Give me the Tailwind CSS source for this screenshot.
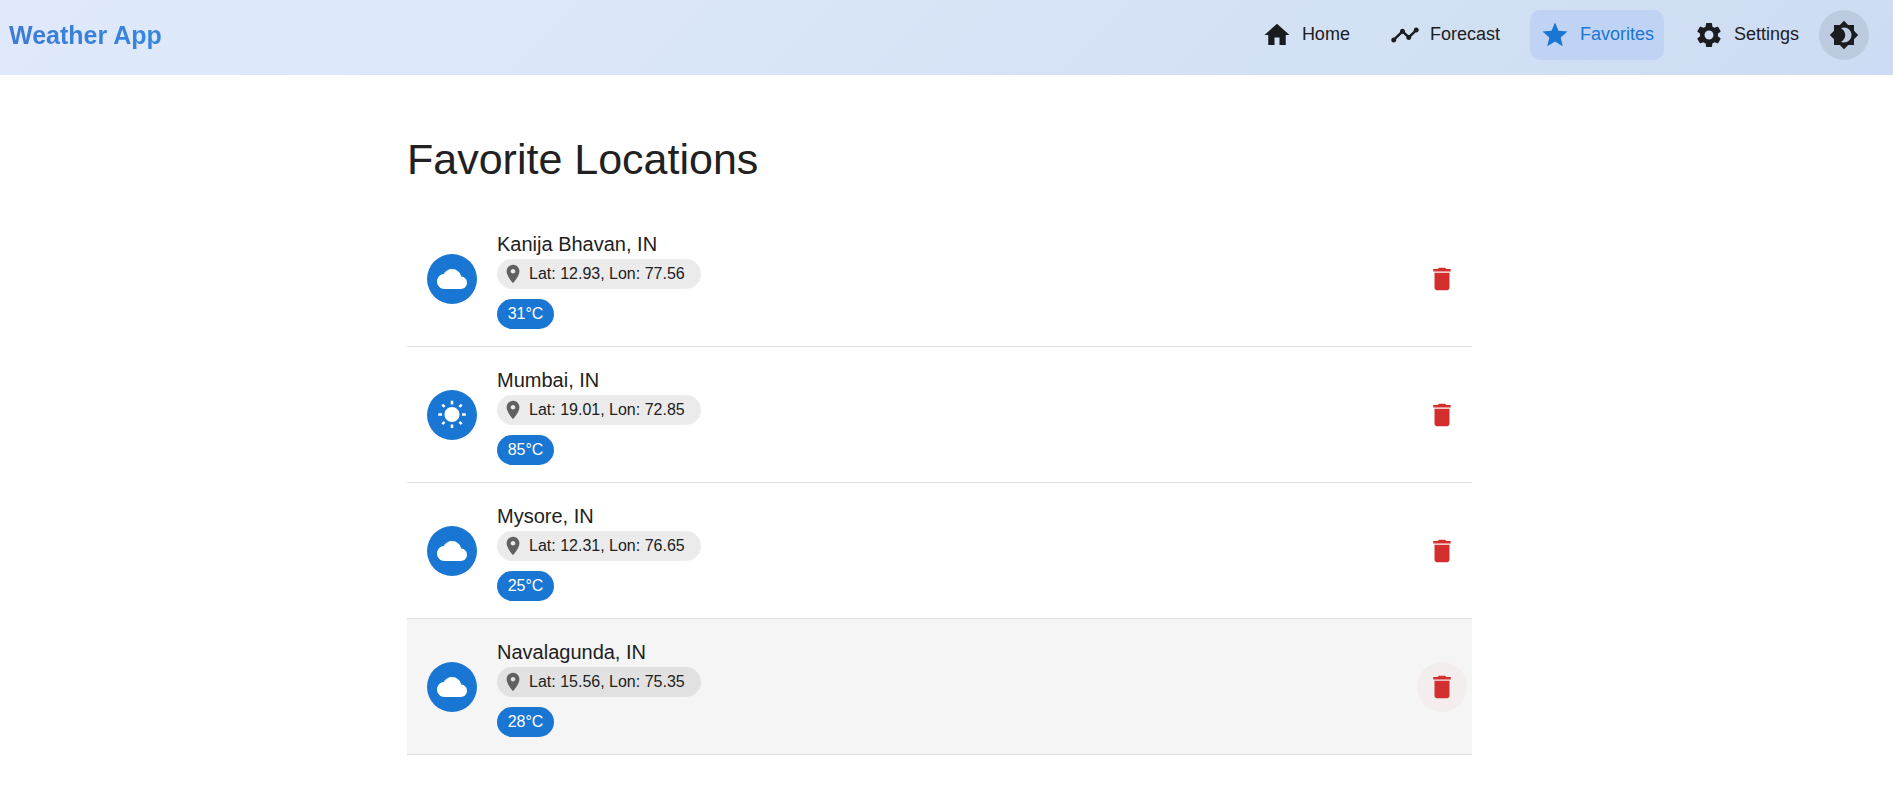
<!DOCTYPE html>
<html lang="en">
<head>
<meta charset="utf-8">
<meta name="viewport" content="width=device-width, initial-scale=1">
<title>Weather App</title>
<script src="https://cdn.jsdelivr.net/npm/@tailwindcss/browser@4"></script>
</head>
<body class="bg-white font-['Liberation_Sans',Arial,sans-serif] text-[#212121]">

<svg class="hidden" aria-hidden="true">
  <symbol id="cloud" viewBox="0 0 24 24"><path d="M19.35 10.04C18.67 6.59 15.64 4 12 4 9.11 4 6.6 5.64 5.35 8.04 2.34 8.36 0 10.91 0 14c0 3.31 2.69 6 6 6h13c2.76 0 5-2.24 5-5 0-2.64-2.05-4.78-4.65-4.96z"/></symbol>
  <symbol id="sun" viewBox="0 0 24 24"><path d="m6.76 4.84-1.8-1.79-1.41 1.41 1.79 1.79 1.42-1.41zM4 10.5H1v2h3v-2zm9-9.95h-2V3.5h2V.55zm7.45 3.91-1.41-1.41-1.79 1.79 1.41 1.41 1.79-1.79zm-3.21 13.7 1.79 1.8 1.41-1.41-1.8-1.79-1.4 1.4zM20 10.5v2h3v-2h-3zm-8-5c-3.31 0-6 2.69-6 6s2.69 6 6 6 6-2.69 6-6-2.69-6-6-6zm-1 16.95h2V19.5h-2v2.95zm-7.45-3.91 1.41 1.41 1.79-1.8-1.41-1.41-1.79 1.8z"/></symbol>
  <symbol id="pin" viewBox="0 0 24 24"><path d="M12 2C8.13 2 5 5.13 5 9c0 5.25 7 13 7 13s7-7.75 7-13c0-3.87-3.13-7-7-7zm0 9.5c-1.38 0-2.5-1.12-2.5-2.5s1.12-2.5 2.5-2.5 2.5 1.12 2.5 2.5-1.12 2.5-2.5 2.5z"/></symbol>
  <symbol id="trash" viewBox="0 0 24 24"><path d="M6 19c0 1.1.9 2 2 2h8c1.1 0 2-.9 2-2V7H6v12zM19 4h-3.5l-1-1h-5l-1 1H5v2h14V4z"/></symbol>
</svg>

<header class="flex items-center justify-between bg-linear-[135deg,#dfe9fb,#dbe7f9_30%,#d2e0f3_75%,#cddcf4] pt-2.5 pr-6 pb-[15px] pl-[9px]">
  <a href="#" class="bg-linear-[45deg,#3f78d6,#3389de] bg-clip-text text-[25px] leading-[30px] font-bold text-transparent">Weather App</a>
  <div class="flex items-center gap-2.5">
    <nav class="flex items-center gap-5 text-lg text-[#1b1c1f]">
      <a href="#" class="flex h-[50px] items-center gap-2.5 rounded-[10px] px-2.5">
        <svg class="size-[30px] fill-current" viewBox="0 0 24 24"><path d="M10 20v-6h4v6h5v-8h3L12 3 2 12h3v8z"/></svg>
        <span class="pb-0.5">Home</span>
      </a>
      <a href="#" class="flex h-[50px] items-center gap-2.5 rounded-[10px] px-2.5">
        <svg class="size-[30px] fill-current" viewBox="0 0 24 24"><path d="M23 8c0 1.1-.9 2-2 2-.18 0-.35-.02-.51-.07l-3.56 3.55c.05.16.07.34.07.52 0 1.1-.9 2-2 2s-2-.9-2-2c0-.18.02-.36.07-.52l-2.55-2.55c-.16.05-.34.07-.52.07s-.36-.02-.52-.07l-4.55 4.56c.05.16.07.33.07.51 0 1.1-.9 2-2 2s-2-.9-2-2 .9-2 2-2c.18 0 .35.02.51.07l4.56-4.55C8.02 9.36 8 9.18 8 9c0-1.1.9-2 2-2s2 .9 2 2c0 .18-.02.36-.07.52l2.55 2.55c.16-.05.34-.07.52-.07s.36.02.52.07l3.55-3.56C19.02 8.35 19 8.18 19 8c0-1.1.9-2 2-2s2 .9 2 2z"/></svg>
        <span class="pb-0.5">Forecast</span>
      </a>
      <a href="#" aria-current="page" class="flex h-[50px] items-center gap-2.5 rounded-[10px] bg-[#c0d3f4] px-2.5 text-[#1976d2]">
        <svg class="size-[30px] fill-current" viewBox="0 0 24 24"><path d="M12 17.27 18.18 21l-1.64-7.03L22 9.24l-7.19-.61L12 2 9.19 8.63 2 9.24l5.46 4.73L5.82 21z"/></svg>
        <span class="pb-0.5">Favorites</span>
      </a>
      <a href="#" class="flex h-[50px] items-center gap-2.5 rounded-[10px] px-2.5">
        <svg class="size-[30px] fill-current" viewBox="0 0 24 24"><path d="M19.14 12.94c.04-.3.06-.61.06-.94 0-.32-.02-.64-.07-.94l2.03-1.58c.18-.14.23-.41.12-.61l-1.92-3.32c-.12-.22-.37-.29-.59-.22l-2.39.96c-.5-.38-1.03-.7-1.62-.94l-.36-2.54c-.04-.24-.24-.41-.48-.41h-3.84c-.24 0-.43.17-.47.41l-.36 2.54c-.59.24-1.13.57-1.62.94l-2.39-.96c-.22-.08-.47 0-.59.22L2.74 8.87c-.12.21-.08.47.12.61l2.03 1.58c-.05.3-.09.63-.09.94s.02.64.07.94l-2.03 1.58c-.18.14-.23.41-.12.61l1.92 3.32c.12.22.37.29.59.22l2.39-.96c.5.38 1.03.7 1.62.94l.36 2.54c.05.24.24.41.48.41h3.84c.24 0 .44-.17.47-.41l.36-2.54c.59-.24 1.13-.56 1.62-.94l2.39.96c.22.08.47 0 .59-.22l1.92-3.32c.12-.22.07-.47-.12-.61l-2.01-1.58zM12 15.6c-1.98 0-3.6-1.62-3.6-3.6s1.62-3.6 3.6-3.6 3.6 1.62 3.6 3.6-1.62 3.6-3.6 3.6z"/></svg>
        <span class="pb-0.5">Settings</span>
      </a>
    </nav>
    <button type="button" aria-label="Toggle dark mode" class="flex size-[50px] items-center justify-center rounded-full bg-black/8 text-[#1b1c1f]">
      <svg class="size-[30px] fill-current" viewBox="0 0 24 24"><path d="M20 8.69V4h-4.69L12 .69 8.69 4H4v4.69L.69 12 4 15.31V20h4.69L12 23.31 15.31 20H20v-4.69L23.31 12 20 8.69zM12 18c-.89 0-1.74-.2-2.5-.55C11.56 16.5 13 14.42 13 12s-1.44-4.5-3.5-5.45C10.26 6.2 11.11 6 12 6c3.31 0 6 2.69 6 6s-2.69 6-6 6z"/></svg>
    </button>
  </div>
</header>

<div class="pr-3.5">
<main class="mx-auto max-w-[1065px] pt-[58px]">
  <h1 class="text-[43px] leading-[52px]">Favorite Locations</h1>
  <ul class="mt-[26px]">
    <li class="flex items-center border-b border-[#e0e0e0] pt-[18px] pr-[5px] pb-[17px] pl-5">
      <div class="flex size-[50px] items-center justify-center rounded-full bg-[#1976d2]"><svg class="size-[30px] fill-white"><use href="#cloud"/></svg></div>
      <div class="ml-5 flex flex-1 flex-col items-start">
        <h2 class="text-xl leading-[30px]">Kanija Bhavan, IN</h2>
        <div class="flex h-[30px] min-w-[204px] items-center gap-[5px] rounded-full bg-[#ebebeb] pr-2.5 pl-[5px]"><svg class="size-[22px] fill-[#616161]"><use href="#pin"/></svg><span>Lat: 12.93, Lon: 77.56</span></div>
        <div class="mt-2.5 flex h-[30px] min-w-[57px] items-center justify-center rounded-full bg-[#1976d2] px-2.5 text-white">31°C</div>
      </div>
      <button type="button" aria-label="Delete Kanija Bhavan" class="flex size-[50px] items-center justify-center rounded-full"><svg class="size-[30px] fill-[#d32f2f]"><use href="#trash"/></svg></button>
    </li>
    <li class="flex items-center border-b border-[#e0e0e0] pt-[18px] pr-[5px] pb-[17px] pl-5">
      <div class="flex size-[50px] items-center justify-center rounded-full bg-[#1976d2]"><svg class="size-[30px] fill-white"><use href="#sun"/></svg></div>
      <div class="ml-5 flex flex-1 flex-col items-start">
        <h2 class="text-xl leading-[30px]">Mumbai, IN</h2>
        <div class="flex h-[30px] min-w-[204px] items-center gap-[5px] rounded-full bg-[#ebebeb] pr-2.5 pl-[5px]"><svg class="size-[22px] fill-[#616161]"><use href="#pin"/></svg><span>Lat: 19.01, Lon: 72.85</span></div>
        <div class="mt-2.5 flex h-[30px] min-w-[57px] items-center justify-center rounded-full bg-[#1976d2] px-2.5 text-white">85°C</div>
      </div>
      <button type="button" aria-label="Delete Mumbai" class="flex size-[50px] items-center justify-center rounded-full"><svg class="size-[30px] fill-[#d32f2f]"><use href="#trash"/></svg></button>
    </li>
    <li class="flex items-center border-b border-[#e0e0e0] pt-[18px] pr-[5px] pb-[17px] pl-5">
      <div class="flex size-[50px] items-center justify-center rounded-full bg-[#1976d2]"><svg class="size-[30px] fill-white"><use href="#cloud"/></svg></div>
      <div class="ml-5 flex flex-1 flex-col items-start">
        <h2 class="text-xl leading-[30px]">Mysore, IN</h2>
        <div class="flex h-[30px] min-w-[204px] items-center gap-[5px] rounded-full bg-[#ebebeb] pr-2.5 pl-[5px]"><svg class="size-[22px] fill-[#616161]"><use href="#pin"/></svg><span>Lat: 12.31, Lon: 76.65</span></div>
        <div class="mt-2.5 flex h-[30px] min-w-[57px] items-center justify-center rounded-full bg-[#1976d2] px-2.5 text-white">25°C</div>
      </div>
      <button type="button" aria-label="Delete Mysore" class="flex size-[50px] items-center justify-center rounded-full"><svg class="size-[30px] fill-[#d32f2f]"><use href="#trash"/></svg></button>
    </li>
    <li class="flex items-center border-b border-[#e0e0e0] bg-[#f5f5f5] pt-[18px] pr-[5px] pb-[17px] pl-5">
      <div class="flex size-[50px] items-center justify-center rounded-full bg-[#1976d2]"><svg class="size-[30px] fill-white"><use href="#cloud"/></svg></div>
      <div class="ml-5 flex flex-1 flex-col items-start">
        <h2 class="text-xl leading-[30px]">Navalagunda, IN</h2>
        <div class="flex h-[30px] min-w-[204px] items-center gap-[5px] rounded-full bg-[#e1e1e1] pr-2.5 pl-[5px]"><svg class="size-[22px] fill-[#616161]"><use href="#pin"/></svg><span>Lat: 15.56, Lon: 75.35</span></div>
        <div class="mt-2.5 flex h-[30px] min-w-[57px] items-center justify-center rounded-full bg-[#1976d2] px-2.5 text-white">28°C</div>
      </div>
      <button type="button" aria-label="Delete Navalagunda" class="flex size-[50px] items-center justify-center rounded-full bg-[#f3eded]"><svg class="size-[30px] fill-[#d32f2f]"><use href="#trash"/></svg></button>
    </li>
  </ul>
</main>
</div>
</body>
</html>
